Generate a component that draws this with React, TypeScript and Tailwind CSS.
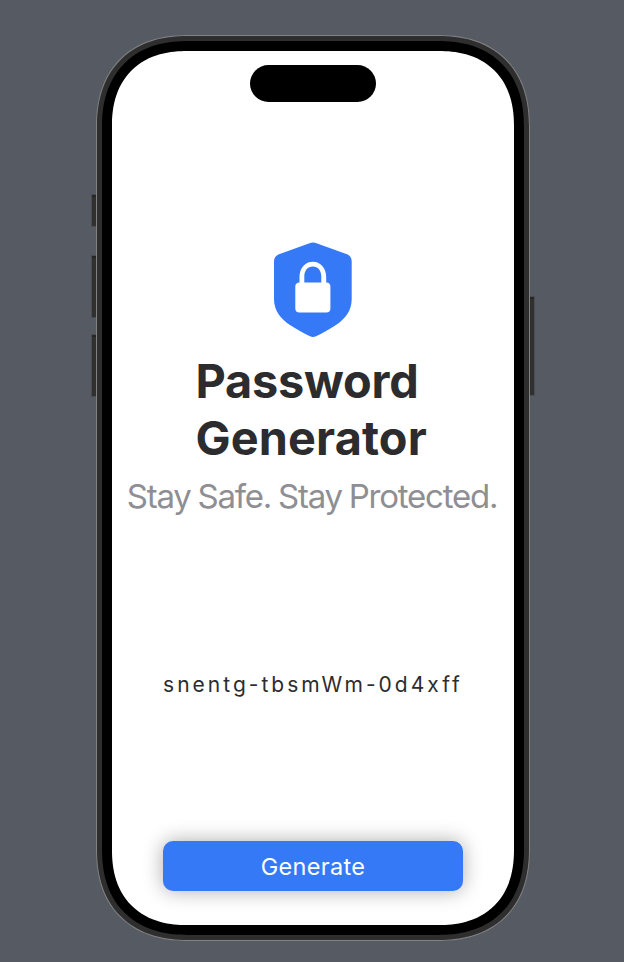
function SideButton({ className }: { className: string }) {
  return (
    <div className={`absolute border-t-2 border-t-[#252525] bg-[#30312f] shadow-[0_0_0_1px_#4b4e51] ${className}`} />
  );
}

function ShieldLock() {
  return (
    <svg width="78" height="95" viewBox="0 0 78 95" className="block">
      <path
        d="M35.5 1.2Q39 -.1 42.5 1.2L73 12.2Q77.700 14 77.700 19.5V57C77.700 69 71 77 62 83C55 87.500 48 91.500 42 94.200Q39 95.600 36 94.200C30 91.500 23 87.500 16 83C7 77 0 69 0 57V19.500Q0 14 5 12.200Z"
        fill="#3579f7"
      />
      <path
        d="M25.500 40.500V35C25.500 25.800 31.200 19.700 38.800 19.700S52.200 25.800 52.200 35V40.500H52.500Q56.400 40.800 56.400 44.500V66.200Q56.400 70.500 52.300 70.500H25.400Q21.300 70.500 21.300 66.200V44.500Q21.300 40.800 25.500 40.500ZM30.300 40.500H47.300V34.500C47.300 28.500 44 24.500 38.800 24.500S30.300 28.500 30.300 34.500Z"
        fill="#fff"
      />
    </svg>
  );
}

export default function App() {
  return (
    <main className="flex h-[962px] w-[624px] justify-center bg-[#565b63] pt-[35px] pl-[2px] font-['Inter','Liberation_Sans',sans-serif]">
      <div className="relative h-[906px] w-[434px]">
        <SideButton className="top-[160px] -left-[4px] h-[31px] w-[6px]" />
        <SideButton className="top-[221px] -left-[4px] h-[61px] w-[6px]" />
        <SideButton className="top-[300px] -left-[4px] h-[61px] w-[6px]" />
        <SideButton className="top-[262px] -right-[4px] h-[98px] w-[6px]" />
        <div className="relative h-full w-full rounded-[92px] [corner-shape:superellipse(1.2)] border border-[#818181] bg-[#2e2e2e] p-[5px]">
          <div className="h-full w-full rounded-[86px] [corner-shape:superellipse(1.2)] bg-black p-[10px]">
            <div className="flex h-full w-full flex-col items-center rounded-[75px] [corner-shape:superellipse(1.2)] bg-white pt-[14px]">
              <div className="h-[37px] w-[126px] shrink-0 rounded-full bg-black" />
              <div className="mt-[140px]">
                <ShieldLock />
              </div>
              <h1 className="mt-[16px] flex w-[235px] flex-col text-[46.8px] leading-[57px] font-bold whitespace-nowrap text-[#2c2c2e]">
                <span className="tracking-[-0.2px]">Password</span>
                <span className="tracking-[0.15px]">Generator</span>
              </h1>
              <p className="mt-[9px] mr-[2px] text-[33px] leading-[40px] tracking-[-1.22px] [word-spacing:-1.2px] whitespace-nowrap text-[#8e8e93]">
                Stay Safe. Stay Protected.
              </p>
              <p className="mt-[155px] text-[21px] leading-[28px] tracking-[3px] whitespace-nowrap text-[#2c2c2e]">
                snentg-tbsmWm-0d4xff
              </p>
              <button className="mt-[142px] h-[50px] w-[300px] shrink-0 rounded-[10px] bg-[#3579f7] pt-[1px] text-[23.5px] tracking-[0.3px] text-white shadow-[0_0_20px_rgba(0,0,0,0.33)]">
                Generate
              </button>
            </div>
          </div>
        </div>
      </div>
    </main>
  );
}
